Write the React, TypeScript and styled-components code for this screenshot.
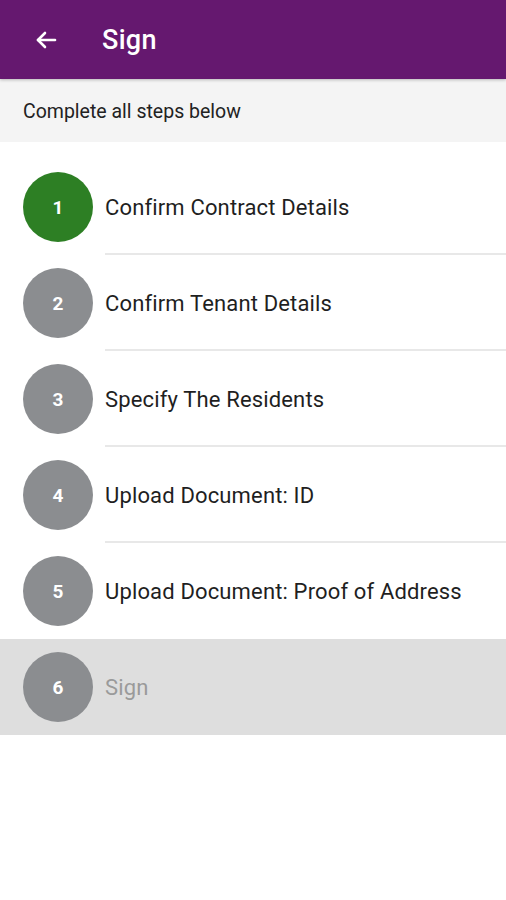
import React from 'react';
import styled, { createGlobalStyle } from 'styled-components';

const GlobalStyle = createGlobalStyle`
    body {
        margin: 0;
        background: #ffffff;
        font-family: Roboto, "Noto Sans", sans-serif;
    }
`;

const Page = styled.div`
    width: 506px;
    min-height: 900px;
    background: #ffffff;
`;

const AppBar = styled.header`
    display: flex;
    align-items: center;
    height: 79px;
    padding: 0 0 0 33px;
    box-sizing: border-box;
    background: #65186f;
    color: #ffffff;
    box-shadow: 0 1px 3px rgba(0, 0, 0, 0.25);
    position: relative;
    z-index: 1;
`;

const BackButton = styled.button`
    display: flex;
    align-items: center;
    justify-content: center;
    width: 26px;
    height: 26px;
    padding: 0;
    border: none;
    background: transparent;
    color: #ffffff;
`;

const Title = styled.h1`
    margin: 0 0 0 43px;
    font-size: 27px;
    font-weight: 500;
    letter-spacing: 0.3px;
`;

const Intro = styled.div`
    display: flex;
    align-items: center;
    height: 63px;
    padding: 1px 0 0 23px;
    box-sizing: border-box;
    background: #f4f4f4;
    font-size: 19.5px;
    color: #222222;
`;

const StepList = styled.ul`
    list-style: none;
    margin: 0;
    padding: 17px 0 0;
`;

const Step = styled.li<{ $disabled?: boolean }>`
    display: flex;
    align-items: center;
    height: 96px;
    background: ${p => (p.$disabled ? '#dedede' : 'transparent')};
`;

const Badge = styled.div<{ $done?: boolean }>`
    display: flex;
    align-items: center;
    justify-content: center;
    flex: 0 0 70px;
    width: 70px;
    height: 70px;
    margin: 0 12px 0 23px;
    border-radius: 50%;
    background: ${p => (p.$done ? '#2d7f24' : '#8b8d90')};
    color: #ffffff;
    font-size: 19px;
    font-weight: 700;
`;

const Label = styled.div<{ $disabled?: boolean; $last?: boolean }>`
    display: flex;
    align-items: center;
    align-self: stretch;
    flex: 1;
    font-size: 22px;
    letter-spacing: 0.15px;
    color: ${p => (p.$disabled ? '#9a9a9a' : '#1f1f1f')};
    border-bottom: ${p => (p.$last ? 'none' : '2px solid #e8e8e8')};
    box-sizing: border-box;
    padding-top: ${p => (p.$last ? '0' : '2px')};
`;

const steps = [
    'Confirm Contract Details',
    'Confirm Tenant Details',
    'Specify The Residents',
    'Upload Document: ID',
    'Upload Document: Proof of Address',
    'Sign',
];

export default function App() {
    return (
        <Page>
            <GlobalStyle />
            <AppBar>
                <BackButton aria-label="Back">
                    <svg width="24" height="24" viewBox="0 0 24 24" fill="none" stroke="currentColor" strokeWidth="2.6" strokeLinecap="round" strokeLinejoin="round">
                        <path d="M21 12H4" />
                        <path d="M11 5l-7 7 7 7" />
                    </svg>
                </BackButton>
                <Title>Sign</Title>
            </AppBar>
            <Intro>Complete all steps below</Intro>
            <StepList>
                {steps.map((s, i) => {
                    const last = i === steps.length - 1;
                    return (
                        <Step key={s} $disabled={last}>
                            <Badge $done={i === 0}>{i + 1}</Badge>
                            <Label $disabled={last} $last={last || i === steps.length - 2}>
                                {s}
                            </Label>
                        </Step>
                    );
                })}
            </StepList>
        </Page>
    );
}
